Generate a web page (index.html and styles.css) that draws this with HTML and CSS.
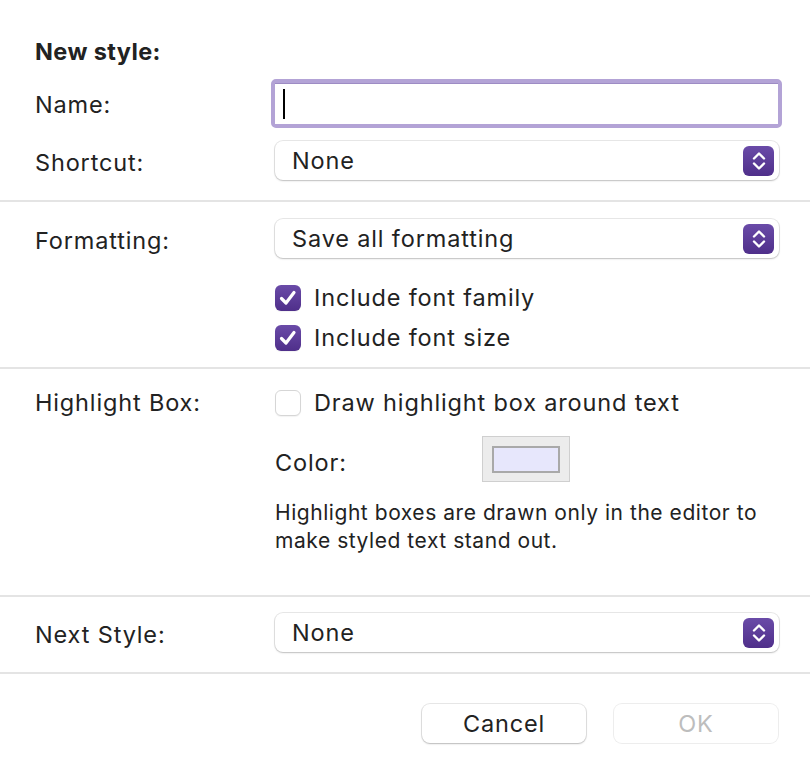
FILE: index.html
```html
<!DOCTYPE html>
<html>
<head>
<meta charset="utf-8">
<link rel="stylesheet" href="styles.css">
</head>
<body>
<div class="dialog">
  <section class="sec sec-top">
    <div class="title">New style:</div>
    <div class="row row-name">
      <div class="label">Name:</div>
      <div class="ctrl"><div class="focus"><div class="textfield"><span class="caret"></span></div></div></div>
    </div>
    <div class="row row-shortcut">
      <div class="label">Shortcut:</div>
      <div class="ctrl">
        <div class="select"><span>None</span><span class="stepper"><svg width="14" height="20" viewBox="0 0 14 20"><path d="M2 7.5 L7 2.5 L12 7.5 M2 12.5 L7 17.5 L12 12.5" fill="none" stroke="#fff" stroke-width="2.4" stroke-linecap="round" stroke-linejoin="round"/></svg></span></div>
      </div>
    </div>
  </section>
  <section class="sec sec-format">
    <div class="row">
      <div class="label">Formatting:</div>
      <div class="ctrl">
        <div class="select"><span>Save all formatting</span><span class="stepper"><svg width="14" height="20" viewBox="0 0 14 20"><path d="M2 7.5 L7 2.5 L12 7.5 M2 12.5 L7 17.5 L12 12.5" fill="none" stroke="#fff" stroke-width="2.4" stroke-linecap="round" stroke-linejoin="round"/></svg></span></div>
      </div>
    </div>
    <div class="checks">
      <div class="check"><span class="box on"><svg width="26" height="26" viewBox="0 0 26 26"><path d="M6.5 13.5 L11 18 L19 7.5" fill="none" stroke="#fff" stroke-width="3.2" stroke-linecap="round" stroke-linejoin="round"/></svg></span><span>Include font family</span></div>
      <div class="check"><span class="box on"><svg width="26" height="26" viewBox="0 0 26 26"><path d="M6.5 13.5 L11 18 L19 7.5" fill="none" stroke="#fff" stroke-width="3.2" stroke-linecap="round" stroke-linejoin="round"/></svg></span><span>Include font size</span></div>
    </div>
  </section>
  <section class="sec sec-highlight">
    <div class="row">
      <div class="label">Highlight Box:</div>
      <div class="ctrl">
        <div class="check"><span class="box"></span><span>Draw highlight box around text</span></div>
      </div>
    </div>
    <div class="color-row">
      <span class="color-label">Color:</span>
      <span class="swatch"><span class="swatch-inner"></span></span>
    </div>
    <p class="note">Highlight boxes are drawn only in the editor to make styled text stand out.</p>
  </section>
  <section class="sec sec-next">
    <div class="row">
      <div class="label">Next Style:</div>
      <div class="ctrl">
        <div class="select"><span>None</span><span class="stepper"><svg width="14" height="20" viewBox="0 0 14 20"><path d="M2 7.5 L7 2.5 L12 7.5 M2 12.5 L7 17.5 L12 12.5" fill="none" stroke="#fff" stroke-width="2.4" stroke-linecap="round" stroke-linejoin="round"/></svg></span></div>
      </div>
    </div>
  </section>
  <div class="buttons">
    <button class="btn">Cancel</button>
    <button class="btn disabled">OK</button>
  </div>
</div>
</body>
</html>
```
FILE: styles.css
```css
html, body {
  margin: 0;
  padding: 0;
  background: #ffffff;
}
body {
  font-family: Inter, "Noto Sans", "Liberation Sans", sans-serif;
  font-size: 23.5px;
  letter-spacing: 0.85px;
  line-height: 30px;
  color: #222222;
  width: 810px;
  height: 768px;
  overflow: hidden;
}
.dialog {
  display: flex;
  flex-direction: column;
}
.sec {
  border-bottom: 2px solid #e4e4e4;
  padding: 0 31px 0 35px;
}
.sec-top {
  padding-top: 37px;
  padding-bottom: 20px;
}
.title {
  font-weight: 700;
  height: 30px;
  letter-spacing: 0.4px;
}
.row {
  display: flex;
  align-items: center;
}
.label {
  width: 240px;
  flex: none;
}
.ctrl {
  flex: 1;
  min-width: 0;
}
.row-name {
  margin-top: 12px;
}
.row-name .label {
  padding-top: 3px;
}
.focus {
  margin-left: -4px;
  margin-right: -3px;
  border: 4px solid #b3a3d6;
  border-radius: 5px;
}
.textfield {
  height: 41px;
  background: #fff;
  border-top: 1px solid #9d8cc4;
  display: flex;
  align-items: center;
  padding-left: 8px;
  box-sizing: border-box;
}
.caret {
  width: 2px;
  height: 30px;
  background: #000;
}
.row-shortcut {
  margin-top: 13px;
}
.row-shortcut .label,
.sec-format .label,
.sec-next .label {
  padding-top: 5px;
}
.select {
  height: 39px;
  box-sizing: border-box;
  border-radius: 8px;
  background: #fff;
  box-shadow: 0 0 0 1px rgba(0,0,0,0.09), 0 1px 2px rgba(0,0,0,0.18);
  display: flex;
  align-items: center;
  justify-content: space-between;
  padding: 0 5px 0 17px;
}
.stepper {
  width: 31px;
  height: 30px;
  border-radius: 6px;
  background: linear-gradient(#6a4ba8, #4f2f8a);
  display: flex;
  align-items: center;
  justify-content: center;
}
.stepper svg,
.box svg {
  display: block;
}
.sec-format {
  padding-top: 17px;
  padding-bottom: 16px;
}
.checks {
  margin-left: 240px;
  margin-top: 27px;
  display: flex;
  flex-direction: column;
  gap: 14px;
}
.check {
  display: flex;
  align-items: center;
  gap: 13px;
  height: 26px;
  white-space: nowrap;
}
.box {
  width: 26px;
  height: 26px;
  box-sizing: border-box;
  border-radius: 6px;
  border: 1px solid #d6d6d6;
  background: #fff;
  box-shadow: 0 1px 1px rgba(0,0,0,0.05);
  display: flex;
  align-items: center;
  justify-content: center;
  flex: none;
}
.box.on {
  border: none;
  background: linear-gradient(#6a4ba8, #4f2f8a);
}
.sec-highlight {
  padding-top: 19px;
  padding-bottom: 40px;
}
.color-row {
  margin-left: 240px;
  margin-top: 18px;
  display: flex;
  align-items: center;
}
.color-label {
  width: 207px;
  padding-top: 7px;
}
.swatch {
  width: 88px;
  height: 46px;
  box-sizing: border-box;
  background: #ececec;
  border: 1px solid #cfcfcf;
  display: flex;
  align-items: center;
  justify-content: center;
}
.swatch-inner {
  width: 68px;
  height: 27px;
  box-sizing: border-box;
  background: #e7e7fc;
  border: 2px solid #a9a9a9;
}
.note {
  margin: 17px 0 0 240px;
  font-size: 21px;
  letter-spacing: 0.55px;
  line-height: 28px;
  width: 500px;
}
.sec-next {
  padding-top: 16px;
  padding-bottom: 20px;
}
.buttons {
  display: flex;
  justify-content: flex-end;
  gap: 28px;
  padding: 30px 32px 0 0;
}
.btn {
  width: 164px;
  height: 39px;
  border: none;
  border-radius: 8px;
  background: #fff;
  box-shadow: 0 0 0 1px rgba(0,0,0,0.09), 0 1px 2px rgba(0,0,0,0.2);
  font-family: inherit;
  font-size: 23.5px;
  letter-spacing: 0.85px;
  color: #222222;
  padding: 0;
}
.btn.disabled {
  color: #bdbdbd;
  box-shadow: 0 0 0 1px rgba(0,0,0,0.07);
}
```
